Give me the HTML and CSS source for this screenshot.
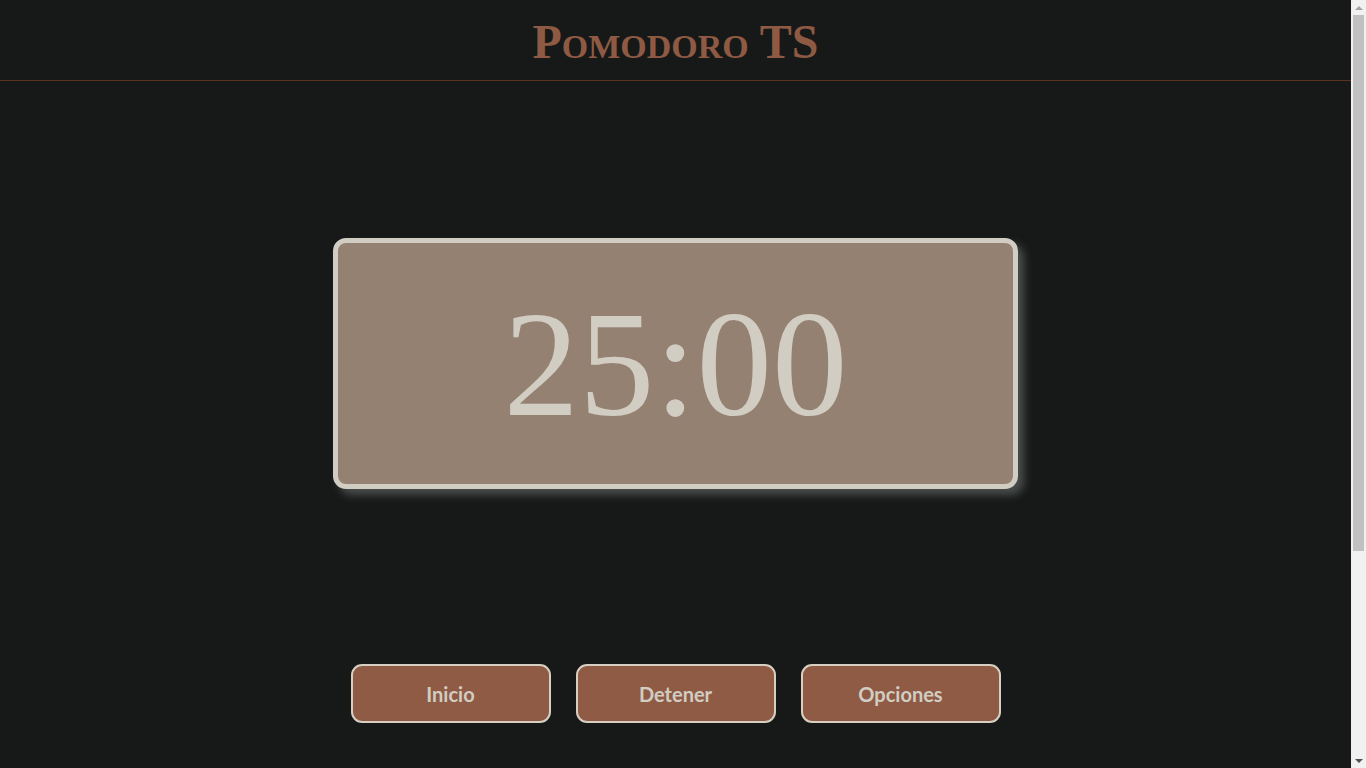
FILE: index.html
```html
<!DOCTYPE html>
<html lang="es">
<head>
<meta charset="utf-8">
<title>Pomodoro TS</title>
<link rel="stylesheet" href="styles.css">
</head>
<body>
<div class="page">
  <header class="header">
    <h1 class="title">Pomodoro TS</h1>
  </header>
  <main class="main">
    <section class="timer">
      <span class="timer-text">25:00</span>
    </section>
    <div class="controls">
      <button class="btn">Inicio</button>
      <button class="btn">Detener</button>
      <button class="btn">Opciones</button>
    </div>
  </main>
</div>
<div class="scrollbar" aria-hidden="true">
  <div class="sb-arrow sb-up"></div>
  <div class="sb-track"><div class="sb-thumb"></div></div>
  <div class="sb-arrow sb-down"></div>
</div>
</body>
</html>
```
FILE: styles.css
```css
html, body {
  margin: 0;
  padding: 0;
}
body {
  background: #171918;
  font-family: "Lato", "Liberation Sans", sans-serif;
}
.page {
  margin-right: 15px;
  min-height: 1060px;
}
.header {
  height: 80px;
  border-bottom: 1px solid #5a3222;
  display: flex;
  align-items: center;
  justify-content: center;
}
.title {
  margin: 0;
  font-family: "Liberation Serif", serif;
  font-variant: small-caps;
  font-weight: bold;
  font-size: 48px;
  color: #8e5a43;
  padding-top: 2px;
}
.main {
  display: flex;
  flex-direction: column;
  align-items: center;
  padding-top: 157px;
}
.timer {
  box-sizing: border-box;
  width: 685px;
  height: 251px;
  background: #948172;
  border: 5px solid #d1cdc2;
  border-radius: 13px;
  box-shadow: 6px 6px 8px #4a4e4d;
  display: flex;
  align-items: center;
  justify-content: center;
}
.timer-text {
  font-family: "Liberation Serif", serif;
  font-size: 151px;
  color: #d1cdc2;
  line-height: 1;
  padding-top: 2px;
}
.controls {
  display: flex;
  gap: 25px;
  margin-top: 175px;
}
.btn {
  box-sizing: border-box;
  width: 200px;
  height: 59px;
  background: #8f5b45;
  border: 2px solid #d6cfc2;
  border-radius: 11px;
  color: #d1cdc2;
  font-family: "Lato", sans-serif;
  font-weight: bold;
  font-size: 20px;
  cursor: pointer;
}
.scrollbar {
  position: fixed;
  top: 0;
  right: 0;
  bottom: 0;
  width: 15px;
  background: #f1f1f1;
  display: flex;
  flex-direction: column;
}
.sb-arrow {
  height: 15px;
  flex: none;
  display: flex;
  align-items: center;
  justify-content: center;
}
.sb-up::before {
  content: "";
  border-left: 4px solid transparent;
  border-right: 4px solid transparent;
  border-bottom: 4px solid #a3a3a3;
}
.sb-down::before {
  content: "";
  border-left: 4px solid transparent;
  border-right: 4px solid transparent;
  border-top: 4px solid #505050;
}
.sb-track {
  flex: 1;
  padding: 0 2px;
}
.sb-thumb {
  height: 536px;
  background: #c1c1c1;
}
```
